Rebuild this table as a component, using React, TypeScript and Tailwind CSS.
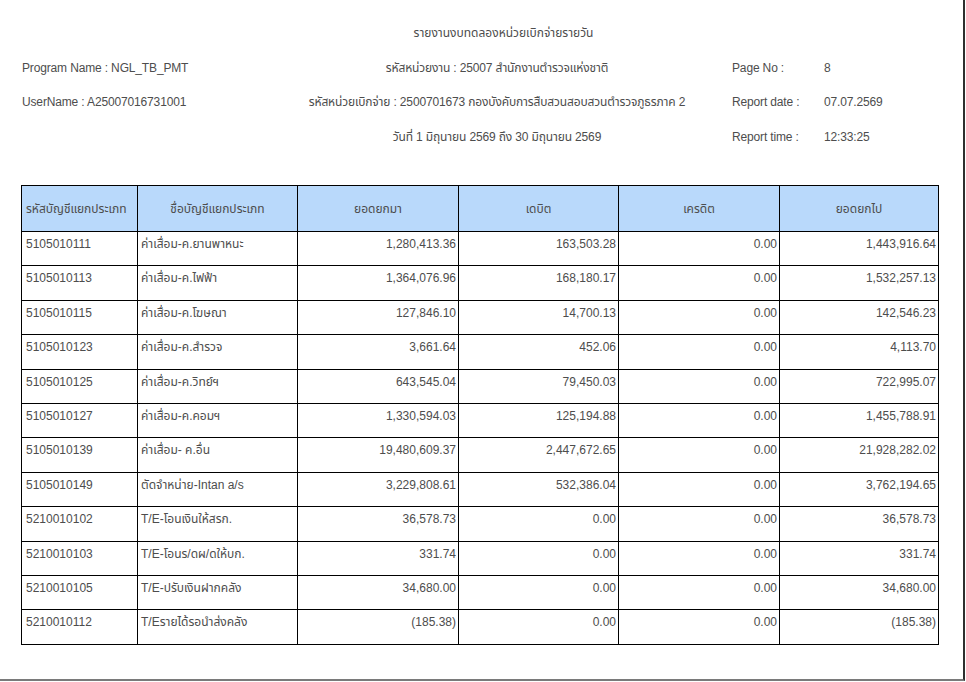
import React from "react";

const rows: [string, string, string, string, string, string][] = [
  ["5105010111", "ค่าเสื่อม-ค.ยานพาหนะ", "1,280,413.36", "163,503.28", "0.00", "1,443,916.64"],
  ["5105010113", "ค่าเสื่อม-ค.ไฟฟ้า", "1,364,076.96", "168,180.17", "0.00", "1,532,257.13"],
  ["5105010115", "ค่าเสื่อม-ค.โฆษณา", "127,846.10", "14,700.13", "0.00", "142,546.23"],
  ["5105010123", "ค่าเสื่อม-ค.สำรวจ", "3,661.64", "452.06", "0.00", "4,113.70"],
  ["5105010125", "ค่าเสื่อม-ค.วิทย์ฯ", "643,545.04", "79,450.03", "0.00", "722,995.07"],
  ["5105010127", "ค่าเสื่อม-ค.คอมฯ", "1,330,594.03", "125,194.88", "0.00", "1,455,788.91"],
  ["5105010139", "ค่าเสื่อม- ค.อื่น", "19,480,609.37", "2,447,672.65", "0.00", "21,928,282.02"],
  ["5105010149", "ตัดจำหน่าย-Intan a/s", "3,229,808.61", "532,386.04", "0.00", "3,762,194.65"],
  ["5210010102", "T/E-โอนเงินให้สรก.", "36,578.73", "0.00", "0.00", "36,578.73"],
  ["5210010103", "T/E-โอนร/ดผ/ดให้บก.", "331.74", "0.00", "0.00", "331.74"],
  ["5210010105", "T/E-ปรับเงินฝากคลัง", "34,680.00", "0.00", "0.00", "34,680.00"],
  ["5210010112", "T/Eรายได้รอนำส่งคลัง", "(185.38)", "0.00", "0.00", "(185.38)"],
];

const font = { fontFamily: '"Liberation Sans", "Noto Sans Thai", "Noto Sans", sans-serif' };

export default function App() {
  return (
    <div className="w-[966px] h-[682px] bg-white overflow-hidden" style={font}>
      <div className="w-[965px] h-[681px] border-r-2 border-b-2 border-r-[#2f2f2f] border-b-[#7a7a7a] text-[12px] text-[#4d4d4d]">
        <div className="pt-[25px] pl-[44px] flex justify-center h-[60px] leading-[16px]">
          รายงานงบทดลองหน่วยเบิกจ่ายรายวัน
        </div>
        <div className="grid grid-cols-[275px_400px_35px_92px_1fr] pl-[22px] leading-[16px] tracking-[-0.15px]">
          <div className="h-[34px]">Program Name : NGL_TB_PMT</div>
          <div className="h-[34px] text-center whitespace-nowrap">รหัสหน่วยงาน : 25007 สำนักงานตำรวจแห่งชาติ</div>
          <div />
          <div className="h-[34px]">Page No :</div>
          <div className="h-[34px]">8</div>

          <div className="h-[35px]">UserName : A25007016731001</div>
          <div className="h-[35px] text-center whitespace-nowrap">รหัสหน่วยเบิกจ่าย : 2500701673 กองบังคับการสืบสวนสอบสวนตำรวจภูธรภาค 2</div>
          <div />
          <div className="h-[35px]">Report date :</div>
          <div className="h-[35px]">07.07.2569</div>

          <div className="h-[56px]"></div>
          <div className="h-[56px] text-center whitespace-nowrap">วันที่ 1 มิถุนายน 2569 ถึง 30 มิถุนายน 2569</div>
          <div />
          <div className="h-[56px]">Report time :</div>
          <div className="h-[56px]">12:33:25</div>
        </div>
        <div className="pl-[21px]">
          <table className="border-collapse table-fixed w-[917px] text-[12px] text-[#4d4d4d]">
            <colgroup>
              <col className="w-[116px]" />
              <col className="w-[160px]" />
              <col className="w-[161px]" />
              <col className="w-[160px]" />
              <col className="w-[161px]" />
              <col className="w-[159px]" />
            </colgroup>
            <thead>
              <tr className="h-[46px] bg-[#b9d9fb]">
                <th className="border border-black font-normal px-[4px] text-left whitespace-nowrap">รหัสบัญชีแยกประเภท</th>
                <th className="border border-black font-normal">ชื่อบัญชีแยกประเภท</th>
                <th className="border border-black font-normal">ยอดยกมา</th>
                <th className="border border-black font-normal">เดบิต</th>
                <th className="border border-black font-normal">เครดิต</th>
                <th className="border border-black font-normal">ยอดยกไป</th>
              </tr>
            </thead>
            <tbody>
              {rows.map((r) => (
                <tr key={r[0]} className="h-[34.4px]">
                  <td className="border border-black align-top pt-[4px] px-[4px] leading-[16px]">{r[0]}</td>
                  <td className="border border-black align-top pt-[4px] px-[3px] leading-[16px] whitespace-nowrap">{r[1]}</td>
                  <td className="border border-black align-top pt-[4px] px-[2px] leading-[16px] text-right">{r[2]}</td>
                  <td className="border border-black align-top pt-[4px] px-[2px] leading-[16px] text-right">{r[3]}</td>
                  <td className="border border-black align-top pt-[4px] px-[2px] leading-[16px] text-right">{r[4]}</td>
                  <td className="border border-black align-top pt-[4px] px-[2px] leading-[16px] text-right">{r[5]}</td>
                </tr>
              ))}
            </tbody>
          </table>
        </div>
      </div>
    </div>
  );
}
